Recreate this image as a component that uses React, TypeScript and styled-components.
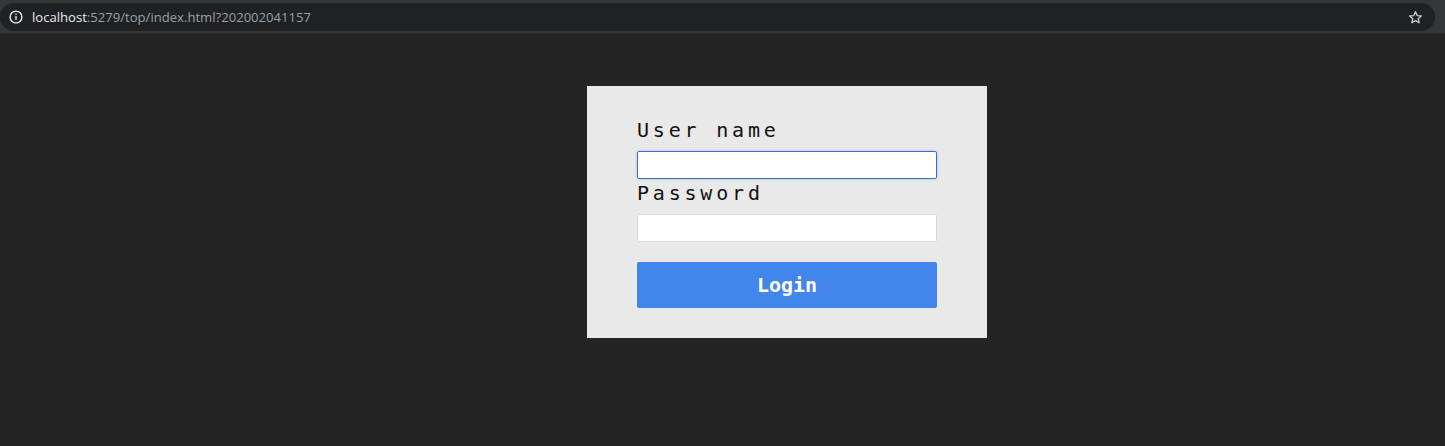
import React from "react";
import styled, { createGlobalStyle } from "styled-components";

const GlobalStyle = createGlobalStyle`
  html, body {
    margin: 0;
    padding: 0;
    background: #242424;
  }
  * { box-sizing: border-box; }
`;

const Toolbar = styled.div`
  height: 34px;
  background: #35363a;
  padding: 3px 10px 3px 0;
  border-bottom: 1px solid #2a2a2c;
`;

const AddressPill = styled.div`
  height: 28px;
  border-radius: 14px;
  background: #202124;
  display: flex;
  align-items: center;
  padding: 0 12px 0 9px;
  font-family: "Open Sans", "Noto Sans", sans-serif;
  font-size: 13.1px;
`;

const Url = styled.span`
  margin-left: 9px;
  flex: 1;
  color: #9aa0a6;
`;

const Host = styled.span`
  color: #e8eaed;
`;

const Page = styled.main`
  display: flex;
  justify-content: center;
  padding-top: 52px;
  padding-left: 129px;
`;

const Card = styled.form`
  width: 400px;
  background: #e9e9e9;
  padding: 32px 50px 30px;
  display: flex;
  flex-direction: column;
`;

const Field = styled.div<{ $first?: boolean }>`
  display: flex;
  flex-direction: column;
  margin-top: ${(p) => (p.$first ? "0" : "2px")};
`;

const Label = styled.label`
  font-family: "DejaVu Sans Mono", monospace;
  font-size: 20px;
  line-height: 24px;
  letter-spacing: 3.8px;
  color: #111;
  margin-bottom: 9px;
`;

const Input = styled.input<{ $focused?: boolean }>`
  height: 28px;
  width: 300px;
  background: #fff;
  border: 1px solid ${(p) => (p.$focused ? "#3a6fc6" : "#d7d9dc")};
  border-radius: 2px;
  outline: none;
  box-shadow: ${(p) => (p.$focused ? "0 0 3px rgba(58,111,198,0.35)" : "none")};
  padding: 0 4px;
`;

const Button = styled.button`
  margin-top: 20px;
  height: 46px;
  width: 300px;
  border: none;
  border-radius: 2px;
  background: #4286eb;
  color: #fff;
  font-family: "DejaVu Sans Mono", monospace;
  font-weight: bold;
  font-size: 20px;
  cursor: pointer;
`;

const InfoIcon = () => (
  <svg width="14" height="14" viewBox="0 0 14 14">
    <circle cx="7" cy="7" r="5.9" fill="none" stroke="#e8eaed" strokeWidth="1.4" />
    <rect x="6.3" y="6" width="1.4" height="4" fill="#e8eaed" />
    <rect x="6.3" y="3.6" width="1.4" height="1.4" fill="#e8eaed" />
  </svg>
);

const StarIcon = () => (
  <svg width="15" height="15" viewBox="0 0 24 24">
    <path
      d="M12 2.8l2.7 6.1 6.6.6-5 4.4 1.5 6.5L12 17l-5.8 3.4 1.5-6.5-5-4.4 6.6-.6z"
      fill="none"
      stroke="#c8cacd"
      strokeWidth="2.2"
      strokeLinejoin="round"
    />
  </svg>
);

export default function App() {
  return (
    <>
      <GlobalStyle />
      <Toolbar>
        <AddressPill>
          <InfoIcon />
          <Url>
            <Host>localhost</Host>:5279/top/index.html?202002041157
          </Url>
          <StarIcon />
        </AddressPill>
      </Toolbar>
      <Page>
        <Card onSubmit={(e) => e.preventDefault()}>
          <Field $first>
            <Label htmlFor="user">User name</Label>
            <Input id="user" $focused />
          </Field>
          <Field>
            <Label htmlFor="pass">Password</Label>
            <Input id="pass" type="password" />
          </Field>
          <Button type="submit">Login</Button>
        </Card>
      </Page>
    </>
  );
}
